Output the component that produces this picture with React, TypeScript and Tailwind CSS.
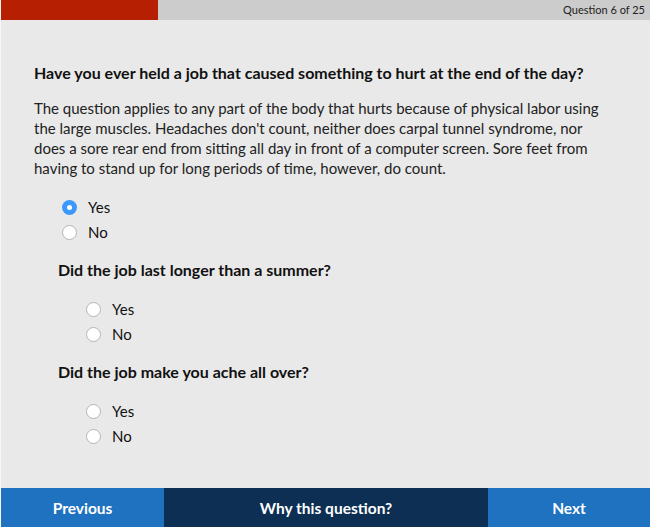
import { useState } from "react";

const font = { fontFamily: "Lato, 'Liberation Sans', sans-serif" };

function Radio({ checked, label, onClick }: { checked: boolean; label: string; onClick: () => void }) {
  return (
    <label onClick={onClick} className="flex items-center h-[25px] cursor-pointer">
      <span
        className={
          checked
            ? "w-[15px] h-[15px] rounded-full bg-[#3b99fc] flex items-center justify-center"
            : "w-[15px] h-[15px] rounded-full bg-white border border-[#b5b5b5]"
        }
      >
        {checked && <span className="w-[5px] h-[5px] rounded-full bg-white" />}
      </span>
      <span className="ml-[11px] text-[15px] text-[#111]">{label}</span>
    </label>
  );
}

function YesNo({ value, onChange, indent }: { value: string; onChange: (v: string) => void; indent: string }) {
  return (
    <div className={indent}>
      <Radio checked={value === "yes"} label="Yes" onClick={() => onChange("yes")} />
      <Radio checked={value === "no"} label="No" onClick={() => onChange("no")} />
    </div>
  );
}

export default function App() {
  const [main, setMain] = useState("yes");
  const [summer, setSummer] = useState("");
  const [ache, setAche] = useState("");

  return (
    <div style={font} className="w-[650px] h-[527px] flex flex-col bg-[#e9e9e9] border-l border-[#f6f6f6] overflow-hidden">
      <div className="h-[20px] flex bg-[#cccccc] shrink-0">
        <div className="w-[157px] bg-[#b71f02]" />
        <div className="flex-1 text-right pr-[5px] text-[11px] leading-[20px] text-[#222]">Question 6 of 25</div>
      </div>

      <div className="flex-1 pl-[33px] pr-[40px] pt-[43px]">
        <h1 className="text-[16px] font-bold text-[#111] leading-[20px] whitespace-nowrap">
          Have you ever held a job that caused something to hurt at the end of the day?
        </h1>
        <p className="mt-[15px] text-[15px] leading-[20px] text-[#222]">
          The question applies to any part of the body that hurts because of physical labor using the large muscles.
          Headaches don't count, neither does carpal tunnel syndrome, nor does a sore rear end from sitting all day in
          front of a computer screen. Sore feet from having to stand up for long periods of time, however, do count.
        </p>

        <div className="mt-[17px]">
          <YesNo value={main} onChange={setMain} indent="pl-[28px]" />
        </div>

        <div className="pl-[24px] mt-[15px]">
          <h2 className="text-[16px] font-bold text-[#111] leading-[20px]">Did the job last longer than a summer?</h2>
          <div className="mt-[17px]">
            <YesNo value={summer} onChange={setSummer} indent="pl-[28px]" />
          </div>
          <h2 className="mt-[15px] text-[16px] font-bold text-[#111] leading-[20px]">Did the job make you ache all over?</h2>
          <div className="mt-[17px]">
            <YesNo value={ache} onChange={setAche} indent="pl-[28px]" />
          </div>
        </div>
      </div>

      <div className="h-[39px] flex shrink-0 text-white font-bold text-[15.5px]">
        <button className="w-[163px] bg-[#1e72bf] pt-[2px]">Previous</button>
        <button className="flex-1 bg-[#0c2f53] pt-[2px]">Why this question?</button>
        <button className="w-[162px] bg-[#1e72bf] pt-[2px]">Next</button>
      </div>
    </div>
  );
}
